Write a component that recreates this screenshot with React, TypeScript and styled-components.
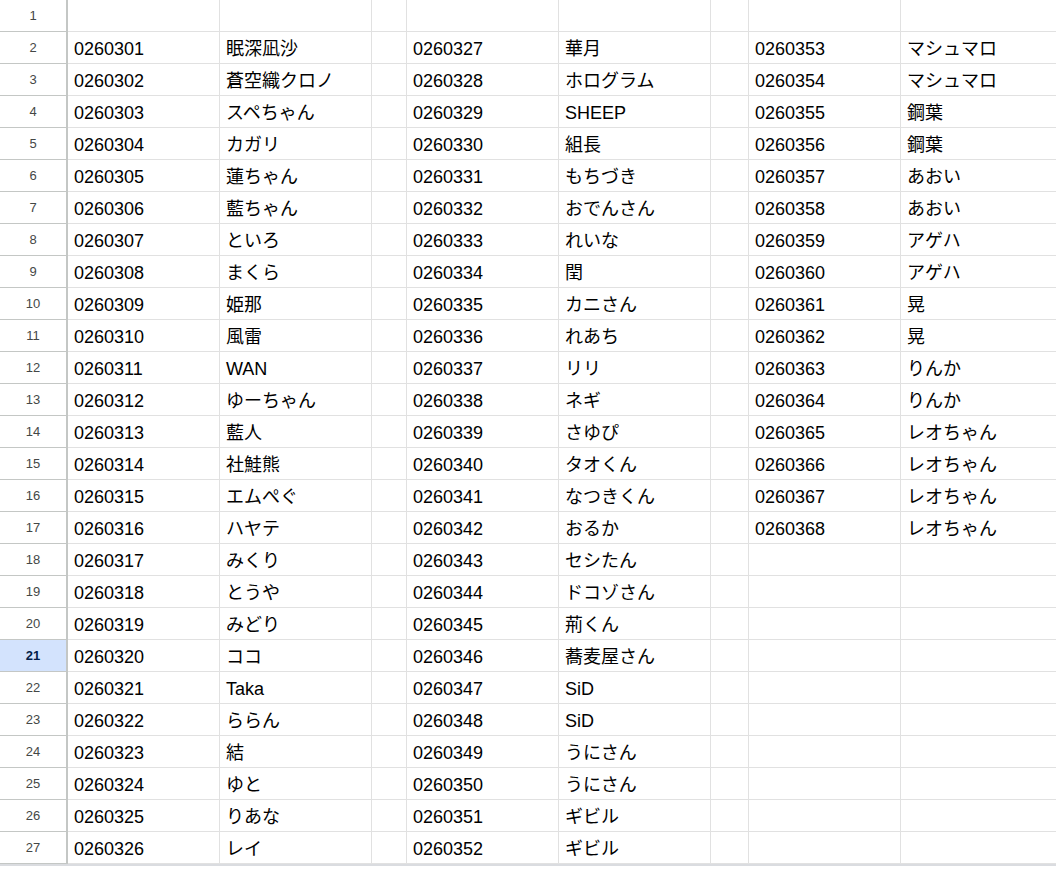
import styled, { createGlobalStyle } from "styled-components";

const GlobalStyle = createGlobalStyle`
  body {
    margin: 0;
    background: #fff;
    font-family: "Liberation Sans", Arial, "Noto Sans CJK JP", sans-serif;
    overflow: hidden;
  }
`;

const Sheet = styled.div`
  display: grid;
  grid-template-columns: 68px 152px 152px 35px 152px 152px 38px 152px 160px;
  grid-auto-rows: 32px;
  width: 1061px;
  border-bottom: 2px solid #dadce0;
`;

const RowHead = styled.div<{ active?: boolean }>`
  text-align: center;
  line-height: 31px;
  font-size: 13px;
  color: ${(p) => (p.active ? "#041e49" : "#444746")};
  font-weight: ${(p) => (p.active ? 700 : 400)};
  background: ${(p) => (p.active ? "#d3e3fd" : "#fff")};
  border-right: 2px solid #c4c7c5;
  border-bottom: 1px solid #c4c7c5;
  box-sizing: border-box;
`;

const Cell = styled.div`
  padding: 1px 0 0 6px;
  line-height: 32px;
  font-size: 18px;
  color: #000;
  border-right: 1px solid #e1e1e1;
  border-bottom: 1px solid #e1e1e1;
  box-sizing: border-box;
  white-space: nowrap;
  overflow: hidden;
`;

const col2 = ["眠深凪沙", "蒼空織クロノ", "スペちゃん", "カガリ", "蓮ちゃん", "藍ちゃん", "といろ", "まくら", "姫那", "風雷", "WAN", "ゆーちゃん", "藍人", "社鮭熊", "エムぺぐ", "ハヤテ", "みくり", "とうや", "みどり", "ココ", "Taka", "ららん", "結", "ゆと", "りあな", "レイ"];
const col5 = ["華月", "ホログラム", "SHEEP", "組長", "もちづき", "おでんさん", "れいな", "閏", "カニさん", "れあち", "リリ", "ネギ", "さゆぴ", "タオくん", "なつきくん", "おるか", "セシたん", "ドコゾさん", "荊くん", "蕎麦屋さん", "SiD", "SiD", "うにさん", "うにさん", "ギビル", "ギビル"];
const col8 = ["マシュマロ", "マシュマロ", "鋼葉", "鋼葉", "あおい", "あおい", "アゲハ", "アゲハ", "晃", "晃", "りんか", "りんか", "レオちゃん", "レオちゃん", "レオちゃん", "レオちゃん"];

const id = (n: number) => "0" + String(260301 + n);

export default function App() {
  const rows = [];
  for (let r = 0; r < 27; r++) {
    const i = r - 1;
    const has = r >= 1;
    rows.push(
      <RowHead key={"h" + r} active={r + 1 === 21}>{r + 1}</RowHead>,
      <Cell key={"a" + r}>{has ? id(i) : ""}</Cell>,
      <Cell key={"b" + r}>{has ? col2[i] : ""}</Cell>,
      <Cell key={"c" + r} />,
      <Cell key={"d" + r}>{has ? id(i + 26) : ""}</Cell>,
      <Cell key={"e" + r}>{has ? col5[i] : ""}</Cell>,
      <Cell key={"f" + r} />,
      <Cell key={"g" + r}>{has && i < 16 ? id(i + 52) : ""}</Cell>,
      <Cell key={"i" + r}>{has && i < 16 ? col8[i] : ""}</Cell>
    );
  }
  return (
    <>
      <GlobalStyle />
      <Sheet>{rows}</Sheet>
    </>
  );
}
